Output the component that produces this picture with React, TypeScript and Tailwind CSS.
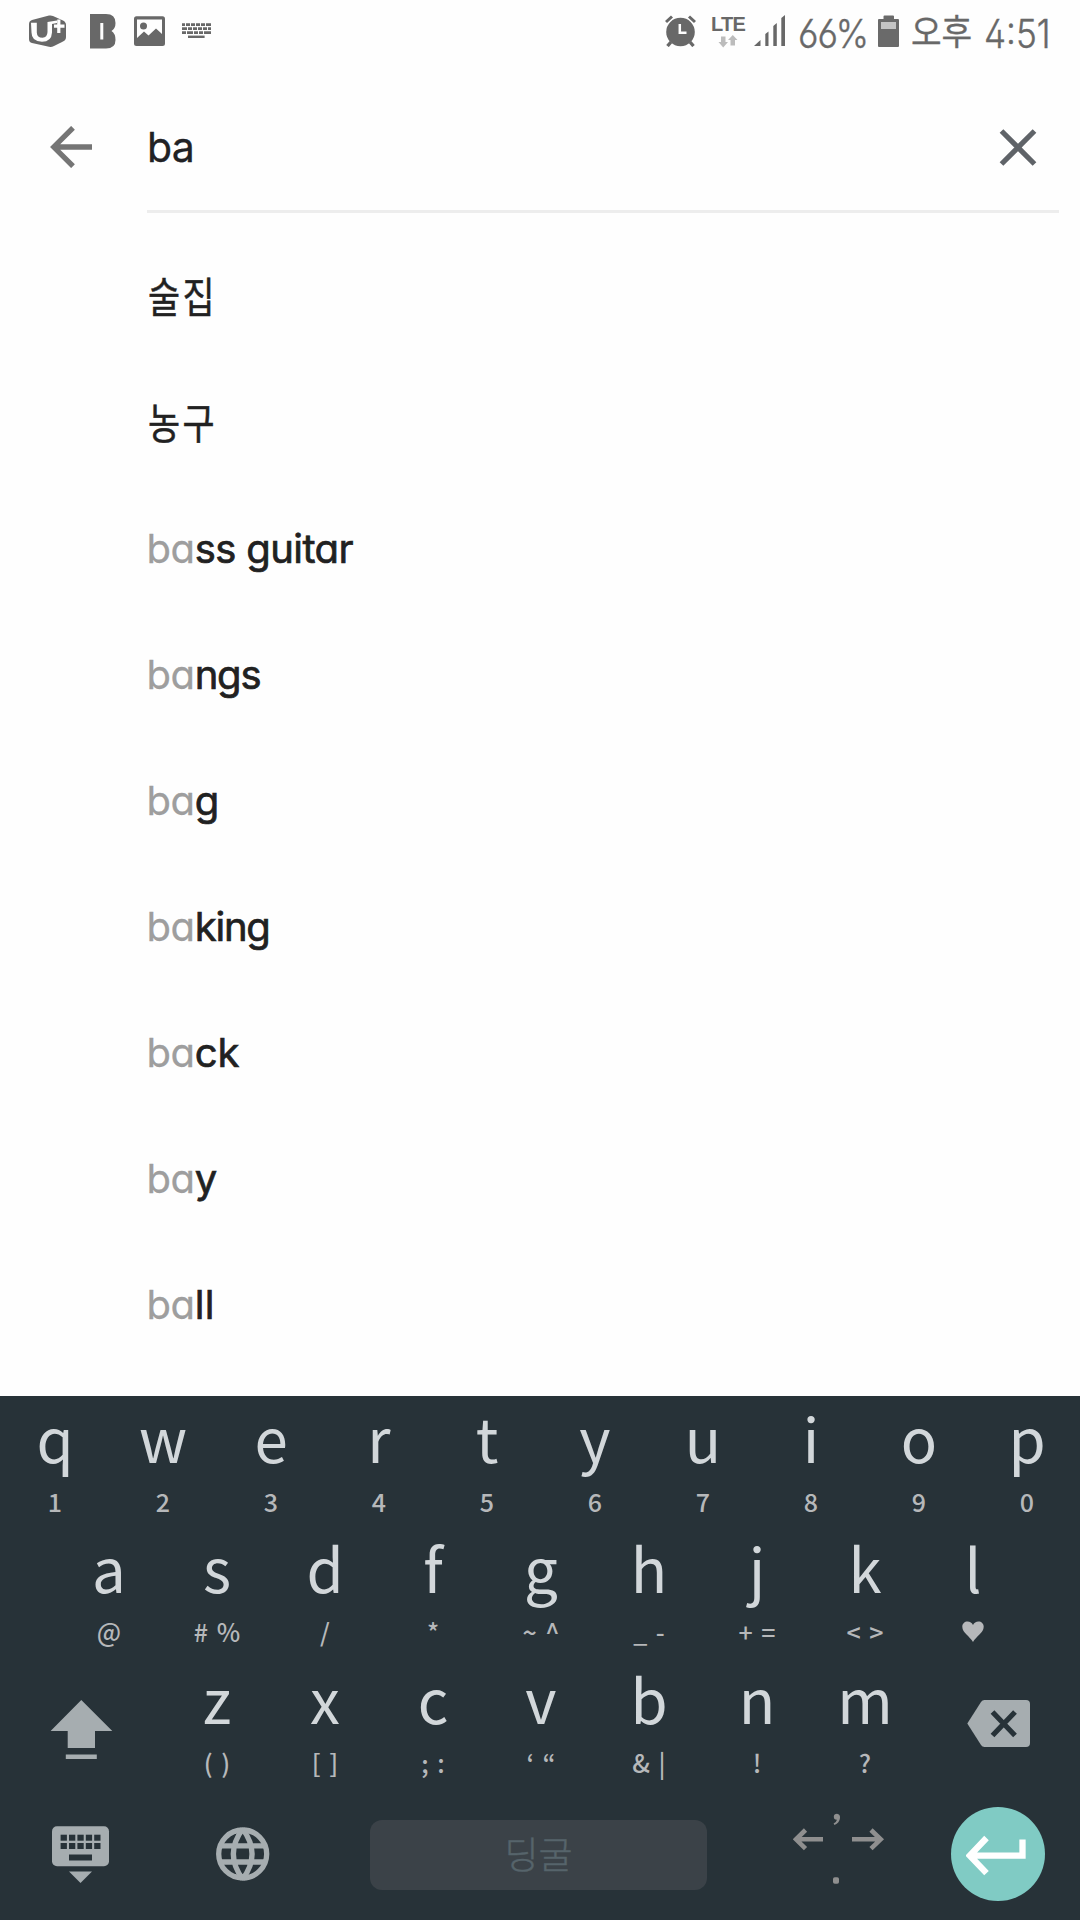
import React from "react";

const suggestions: { typed?: string; rest: string; tracking?: string }[] = [
  { rest: "술집" },
  { rest: "농구" },
  { typed: "ba", rest: "ss guitar", tracking: "tracking-[-0.600px]" },
  { typed: "ba", rest: "ngs", tracking: "tracking-[-1.200px]" },
  { typed: "ba", rest: "g" },
  { typed: "ba", rest: "king", tracking: "tracking-[-1.200px]" },
  { typed: "ba", rest: "ck" },
  { typed: "ba", rest: "y" },
  { typed: "ba", rest: "ll", tracking: "tracking-[0.300px]" },
];

const row1 = [["q", "1"], ["w", "2"], ["e", "3"], ["r", "4"], ["t", "5"], ["y", "6"], ["u", "7"], ["i", "8"], ["o", "9"], ["p", "0"]];
const row2 = [["a", "@"], ["s", "# %"], ["d", "/"], ["f", "*"], ["g", "~ ^"], ["h", "_ -"], ["j", "+ ="], ["k", "< >"], ["l", "♥"]];
const row3 = [["z", "( )"], ["x", "[ ]"], ["c", "; :"], ["v", "‘ “"], ["b", "& |"], ["n", "!"], ["m", "?"]];

function UPlusIcon() {
  return (
    <svg width="37" height="33" viewBox="29 15 37 33" className="shrink-0">
      <path d="M29 24Q29 21 32 20L49 15.6Q51 15 53 16L63 20.500Q66 22 66 25V37Q66 40 63 41.500L54 46Q51.500 47.300 49 46.800L32 43Q29 42.300 29 39Z" fill="#686868" />
      <path d="M31 22.800H36.800V32.500Q37 37.800 42.500 37.800Q47.300 37.500 47.500 32V22L57 20.500V23L52 24V32.500Q51.500 41.800 42 41.800Q31.500 41.500 31.500 32.500Z" fill="#fefefe" />
      <path d="M58.800 19.500V33M54 26.200H64.500" stroke="#fefefe" strokeWidth="3.200" />
    </svg>
  );
}

function BlockLogo() {
  return (
    <svg width="26" height="35" viewBox="0 0 26 35" className="shrink-0">
      <path fillRule="evenodd" fill="#686868" d="M0 0H16Q25.500 0 25.500 9Q25.500 14.500 21.500 17Q25.500 19.500 25.500 26Q25.500 34.500 16 34.500H0ZM10.300 9V25.500H13.300V9Z" />
    </svg>
  );
}

function PictureIcon() {
  return (
    <svg width="31" height="31" viewBox="0 0 31 31" className="shrink-0">
      <path fillRule="evenodd" fill="#686868" d="M2.500 0.300H28.500Q31 0.300 31 3V27.500Q31 30 28.500 30H2.500Q0 30 0 27.500V3Q0 0.300 2.500 0.300ZM3 3.500V22L10 15.500L14.500 19.500L22 12.500L28 18V3.500Z" />
      <circle cx="9.500" cy="10" r="3.500" fill="#686868" />
    </svg>
  );
}

function TinyKeyboardIcon() {
  return (
    <svg width="30" height="16" viewBox="0 0 30 16" className="shrink-0" stroke="#686868" strokeWidth="2.800">
      <path d="M0 1.700H29" strokeDasharray="3 1 4 1 4 1 4 1 4 1 5" />
      <path d="M0 5.700H29" strokeDasharray="5 1 4 1 4 1 4 1 4 1 3" />
      <path d="M0 9.700H29" strokeDasharray="4 1 6 1 4 1 4 1 7" />
      <path d="M6 13.800H22.600" strokeWidth="2.400" />
    </svg>
  );
}

function AlarmIcon() {
  return (
    <svg width="31" height="32" viewBox="0 0 31 32" className="shrink-0">
      <circle cx="15.500" cy="17" r="14.300" fill="#686868" />
      <path d="M1 7L7 1.500M30 7L24 1.500" stroke="#686868" strokeWidth="3" />
      <path d="M6 27L2.500 31M25 27L28.500 31" stroke="#686868" strokeWidth="3.400" />
      <path d="M14.800 9V17.700H21.500" stroke="#fefefe" strokeWidth="2.500" fill="none" />
    </svg>
  );
}

function LteIcon() {
  return (
    <div className="flex h-[34px] w-[34px] shrink-0 flex-col items-center pt-[2px]">
      <span className="font-['Liberation_Sans',sans-serif] text-[20px] leading-[17px] font-bold tracking-[-0.800px] text-[#686868]">LTE</span>
      <svg width="20" height="13" viewBox="0 0 20 13" className="mt-[2px] shrink-0" fill="#bcbcbc">
        <path d="M3 1.500H7.500V7H10L5.200 12.500L0.500 7H3Z" />
        <path d="M12.500 10.500H17V5H19.500L14.800 0L10 5H12.500Z" />
      </svg>
    </div>
  );
}

function SignalIcon() {
  return (
    <svg width="32" height="32" viewBox="0 0 32 32" className="shrink-0" fill="#686868">
      <path d="M0 31L6.500 25V31Z" />
      <path d="M11.300 19L14.500 16.500V31H11.300Z" />
      <path d="M19.300 11L22.800 8V31H19.300Z" />
      <path d="M27.300 3L31 0V31H27.300Z" />
    </svg>
  );
}

function BatteryIcon() {
  return (
    <svg width="22" height="33" viewBox="0 0 22 33" className="shrink-0">
      <path d="M5.500 1.500Q5.500 0.500 6.500 0.500H15Q16 0.500 16 1.500V4H20Q21 4 21 5V31Q21 32 20 32H1Q0 32 0 31V5Q0 4 1 4H5.500Z" fill="#6a6a6a" />
      <rect x="3" y="7" width="15" height="7" fill="#c4c4c4" />
    </svg>
  );
}

function StatusBar() {
  return (
    <div className="flex h-[62px] items-center text-[#686868]">
      <div className="ml-[29px] flex items-center">
        <UPlusIcon />
        <div className="w-[24px]" />
        <BlockLogo />
        <div className="w-[18px]" />
        <PictureIcon />
        <div className="w-[17px]" />
        <TinyKeyboardIcon />
      </div>
      <div className="ml-auto flex h-full w-[415px] items-center">
        <AlarmIcon />
        <div className="ml-[15px]"><LteIcon /></div>
        <div className="ml-[9px]"><SignalIcon /></div>
        <div className="ml-[12px] h-[40px] w-[80px] shrink-0 pt-[3px]">
          <span className="inline-block origin-left scale-x-[0.910] font-['Inter',sans-serif] text-[39px] leading-[40px] font-light tracking-[-1px] [-webkit-text-stroke:0.400px] [font-feature-settings:'cv03','cv02']">66%</span>
        </div>
        <BatteryIcon />
        <div className="ml-[11px] h-[38px] w-[73px] shrink-0">
          <span className="inline-block origin-left scale-x-[0.950] font-['Noto_Sans_CJK_KR',sans-serif] text-[35px] leading-[36px] [-webkit-text-stroke:0.300px]">오후</span>
        </div>
        <div className="h-[40px] shrink-0 pt-[3px]">
          <span className="inline-block origin-left scale-x-[0.900] font-['Inter',sans-serif] text-[39px] leading-[40px] font-light [-webkit-text-stroke:0.400px] [font-feature-settings:'cv03','cv02']">4:51</span>
        </div>
      </div>
    </div>
  );
}

function SearchBar() {
  return (
    <div className="flex h-[151px] pl-[50px]">
      <svg width="42" height="42" viewBox="0 0 42 42" className="mt-[64px] shrink-0">
        <path d="M42 21H4M23 1.800L3.800 21L23 40.200" fill="none" stroke="#757575" strokeWidth="5.300" />
      </svg>
      <div className="ml-[55px] flex w-[912px] items-start justify-between border-b-[3px] border-[#ededed]">
        <span className="mt-[61px] font-['Inter',sans-serif] text-[41px] leading-[48px] tracking-[-0.800px] text-[#202124] [-webkit-text-stroke:0.300px]">ba</span>
        <svg width="38" height="38" viewBox="0 0 38 38" className="mt-[66.500px] mr-[22.500px]">
          <path d="M2.500 2L35.500 35M35.500 2L2.500 35" stroke="#5f6368" strokeWidth="5.200" />
        </svg>
      </div>
    </div>
  );
}

function Suggestions() {
  return (
    <ul className="mt-[20px] flex h-[1163px] flex-col">
      {suggestions.map(({ typed, rest, tracking }) => (
        <li key={rest} className="flex h-[126px] items-center pl-[146.500px] text-[#212121]">
          {typed ? (
            <span className="mt-[2px] flex font-['Inter',sans-serif] text-[40px] leading-[48px] whitespace-pre [font-feature-settings:'cv11']">
              <span className="tracking-[-0.400px] text-[#9e9e9e] [-webkit-text-stroke:0.300px]">{typed}</span>
              <span className={tracking}>
                <span className="[-webkit-text-stroke:0.700px]">{rest}</span>
              </span>
            </span>
          ) : (
            <span className="mb-[3px] ml-[1.500px] origin-left scale-x-[0.830] font-['Noto_Sans_CJK_KR',sans-serif] text-[42px] leading-[48px] tracking-[3px] [-webkit-text-stroke:0.500px]">{rest}</span>
          )}
        </li>
      ))}
    </ul>
  );
}

function Key({ main, sub }: { main: string; sub: string }) {
  return (
    <div className="flex h-[130.500px] w-[108px] shrink-0 flex-col items-center pt-[10.500px] pl-[2px]">
      <span className="text-[60px] leading-[60px] text-[#d2d7da]">{main}</span>
      {sub === "♥" ? (
        <svg width="22" height="22" viewBox="0 0 22 22" className="mt-[24px]" fill="#b6b8ba">
          <path d="M11 21C8 15.500 0.300 12 0.300 5.800C0.300 2.500 2.700 0.500 5.500 0.500C8 0.500 10 1.700 11 4C12 1.700 14 0.500 16.500 0.500C19.300 0.500 21.700 2.500 21.700 5.800C21.700 12 14 15.500 11 21Z" />
        </svg>
      ) : (
        <span className="mt-[21px] text-[25px] leading-[26px] font-medium whitespace-pre text-[#b6b8ba] [word-spacing:3px]">{sub}</span>
      )}
    </div>
  );
}

function Keyboard() {
  return (
    <div className="h-[524px] bg-[#273238] font-['Noto_Sans_CJK_KR',sans-serif]">
      <div className="flex">{row1.map(([m, s]) => <Key key={m} main={m} sub={s} />)}</div>
      <div className="flex justify-center">{row2.map(([m, s]) => <Key key={m} main={m} sub={s} />)}</div>
      <div className="flex">
        <div className="w-[162px] pt-[43px] pl-[50px]">
          <svg width="63" height="60" viewBox="0 0 63 60" fill="#a6adb0">
            <path d="M31.300 0L62.300 31H45V48H17.700V31H0.600Z" />
            <rect x="15.800" y="54.500" width="31" height="4.500" />
          </svg>
        </div>
        {row3.map(([m, s]) => <Key key={m} main={m} sub={s} />)}
        <div className="w-[162px] pt-[43px] pl-[49px]">
          <svg width="63" height="47" viewBox="0 0 63 47">
            <path d="M0.300 23.500L14 2Q15.300 0 17.500 0H59Q63 0 63 4V43Q63 47 59 47H17.500Q15.300 47 14 45Z" fill="#a6adb0" />
            <path d="M25.500 12L48 35.500M48 12L25.500 35.500" stroke="#273238" strokeWidth="5.200" />
          </svg>
        </div>
      </div>
      <div className="flex h-[132px] items-start">
        <svg width="58" height="58" viewBox="0 0 58 58" className="mt-[38.500px] ml-[52px] shrink-0">
          <rect x="0" y="0.300" width="57" height="40" rx="5" fill="#a6adb0" />
          <path d="M17 45.500H40L28.500 57Z" fill="#a6adb0" />
          {[8.6, 17, 25.4, 33.8, 42.2].map((x) => (
            <g key={x} fill="#273238">
              <rect x={x} y="8.700" width="6.300" height="6" />
              <rect x={x} y="17" width="6.300" height="6" />
            </g>
          ))}
          <rect x="17" y="28.500" width="23" height="6" fill="#273238" />
        </svg>
        <svg width="54" height="54" viewBox="0 0 54 54" className="mt-[39.500px] ml-[105.500px] shrink-0" fill="none" stroke="#a6adb0" strokeWidth="5.300">
          <circle cx="26.700" cy="27" r="24" />
          <path d="M26.700 2Q8 27 26.700 52M26.700 2Q45.400 27 26.700 52M5 18.800H48.500M5 35H48.500" />
        </svg>
        <div className="mt-[32px] ml-[100.500px] flex h-[70px] w-[337px] shrink-0 items-center justify-center rounded-xl bg-[#3b4248]">
          <span className="mb-[3px] text-[37px] leading-[40px] font-light text-[#56646b] [-webkit-text-stroke:0.400px]">딩굴</span>
        </div>
        <svg width="92" height="76" viewBox="793 1811 92 76" className="mt-[23.500px] ml-[85.500px] shrink-0">
          <path d="M823 1839.300H796M805.500 1830L796 1839.300L805.500 1848.600M852 1839.300H881M871 1830L880.700 1839.300L871 1848.600" fill="none" stroke="#8f8f8f" strokeWidth="4.600" />
          <path d="M833.800 1816.500Q834 1813.700 837 1813.700Q840.300 1814 840 1818Q839.500 1823 834.500 1825L833.600 1823.500Q836.500 1822 837 1819.800Q833.800 1820 833.800 1816.500Z" fill="#8f8f8f" />
          <rect x="833" y="1877.300" width="6" height="6.500" rx="1.800" fill="#8f8f8f" />
        </svg>
        <div className="mt-[19.500px] ml-[66px] flex size-[94px] shrink-0 rounded-full bg-[#80cbc4]">
          <svg width="60" height="42" viewBox="0 -2 60 42" className="mt-[27.500px] ml-[15.500px]">
            <path d="M20.500 1L3.800 18.600L20.500 36.200M3.800 18.600H56.500V2.500" fill="none" stroke="#fff" strokeWidth="6.300" />
          </svg>
        </div>
      </div>
    </div>
  );
}

export default function App() {
  return (
    <div className="flex h-[1920px] w-[1080px] flex-col overflow-hidden bg-[#fefefe]">
      <StatusBar />
      <SearchBar />
      <Suggestions />
      <Keyboard />
    </div>
  );
}
